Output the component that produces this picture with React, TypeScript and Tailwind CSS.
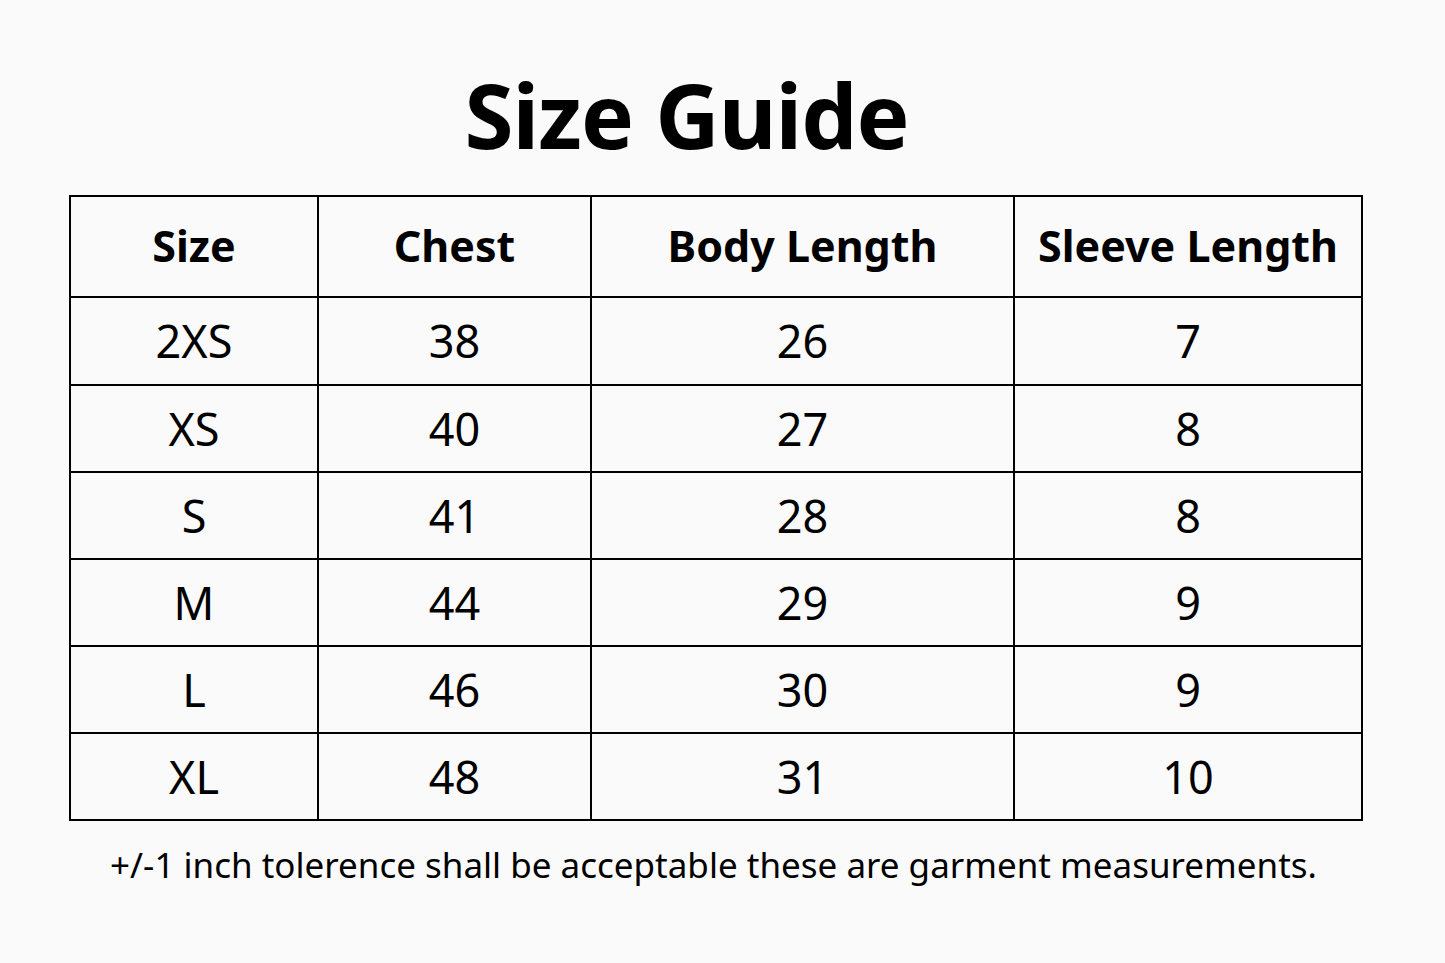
import React from 'react';

const rows: [string, string, string, string][] = [
  ['2XS', '38', '26', '7'],
  ['XS', '40', '27', '8'],
  ['S', '41', '28', '8'],
  ['M', '44', '29', '9'],
  ['L', '46', '30', '9'],
  ['XL', '48', '31', '10'],
];

const headers = ['Size', 'Chest', 'Body Length', 'Sleeve Length'];
const colWidths = ['w-[248px]', 'w-[273px]', 'w-[423px]', 'w-[348px]'];

export default function App() {
  return (
    <div className="w-[1445px] h-[963px] bg-[#fafafa] text-black font-['Noto_Sans','Open_Sans',sans-serif] overflow-hidden">
      <h1 className="text-center ml-[-72px] pt-[60px] h-[195px] text-[89px] leading-[110px] font-bold tracking-[-1px]">
        Size Guide
      </h1>
      <table className="ml-[69px] w-[1292px] border-collapse table-fixed">
        <thead>
          <tr className="h-[101px]">
            {headers.map((h, i) => (
              <th key={h} className={`${colWidths[i]} border-2 border-black text-[43px] font-bold text-center align-middle`}>
                {h}
              </th>
            ))}
          </tr>
        </thead>
        <tbody>
          {rows.map((r, ri) => (
            <tr key={r[0]} className={ri === 0 ? 'h-[88px]' : 'h-[87px]'}>
              {r.map((c, ci) => (
                <td key={ci} className="border-2 border-black text-[45px] text-center align-middle font-normal">
                  {c}
                </td>
              ))}
            </tr>
          ))}
        </tbody>
      </table>
      <p className="text-center ml-[-18px] mt-[24px] text-[35px] leading-[40px]">
        +/-1 inch tolerence shall be acceptable these are garment measurements.
      </p>
    </div>
  );
}
